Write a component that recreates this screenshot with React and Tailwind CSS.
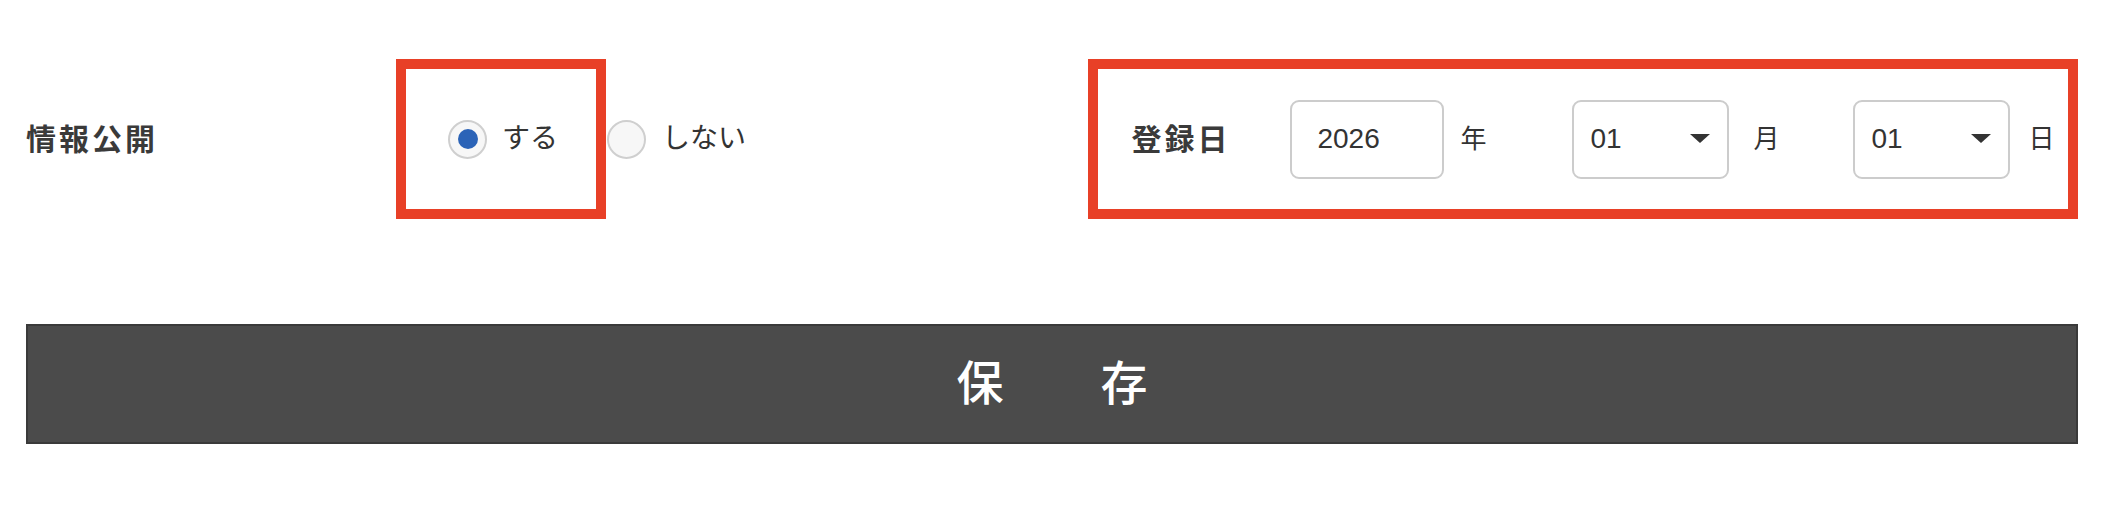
import React from "react";

function Radio({ checked }) {
  return (
    <span className="flex h-[39px] w-[39px] shrink-0 items-center justify-center rounded-full border-2 border-[#cfcfcf] bg-[#f7f7f7]">
      {checked && <span className="h-[20px] w-[20px] rounded-full bg-[#2b63b7]" />}
    </span>
  );
}

function Caret() {
  return (
    <svg width="20" height="10" viewBox="0 0 20 10" className="shrink-0">
      <path d="M0 0 L20 0 L10 9 Z" fill="#333" />
    </svg>
  );
}

export default function App() {
  const font = { fontFamily: '"Liberation Sans", "Noto Sans CJK JP", sans-serif' };
  return (
    <div className="min-h-[522px] w-full bg-white px-[26px] pt-[59px] text-[#333]" style={font}>
      <div className="flex h-[160px] items-center">
        <div className="flex w-[1063px] items-center">
          <div className="w-[370px] text-[30px] font-bold tracking-[3px] text-[#3a3a3a]">情報公開</div>
          <label className="flex h-[160px] items-center border-[10px] border-[#e84027] pl-[42px] pr-[38px]">
            <Radio checked />
            <span className="ml-[15px] text-[28px] leading-none">する</span>
          </label>
          <label className="ml-[1px] flex items-center">
            <Radio />
            <span className="ml-[16px] text-[28px] leading-none">しない</span>
          </label>
        </div>
        <div className="flex h-[160px] w-[990px] items-center border-[10px] border-[#e84027] pl-[33px]">
          <div className="w-[159px] text-[30px] font-bold tracking-[3px] text-[#3a3a3a]">登録日</div>
          <div className="flex w-[282px] items-center">
            <div className="flex h-[79px] w-[154px] items-center rounded-[9px] border-2 border-[#cccccc] pl-[25px] text-[28px]">2026</div>
            <span className="ml-[16px] text-[26px]">年</span>
          </div>
          <div className="flex w-[281px] items-center">
            <div className="flex h-[79px] w-[157px] items-center justify-between rounded-[9px] border-2 border-[#cccccc] pl-[16px] pr-[17px] text-[28px]">
              <span>01</span>
              <Caret />
            </div>
            <span className="ml-[24px] text-[26px]">月</span>
          </div>
          <div className="flex items-center">
            <div className="flex h-[79px] w-[157px] items-center justify-between rounded-[9px] border-2 border-[#cccccc] pl-[16px] pr-[17px] text-[28px]">
              <span>01</span>
              <Caret />
            </div>
            <span className="ml-[18px] text-[26px]">日</span>
          </div>
        </div>
      </div>
      <button className="mt-[105px] flex h-[120px] w-full items-center justify-center border-2 border-[#3a3a3a] bg-[#4b4b4b] text-[47px] font-medium text-white">
        <span>保</span>
        <span className="ml-[97px]">存</span>
      </button>
    </div>
  );
}
